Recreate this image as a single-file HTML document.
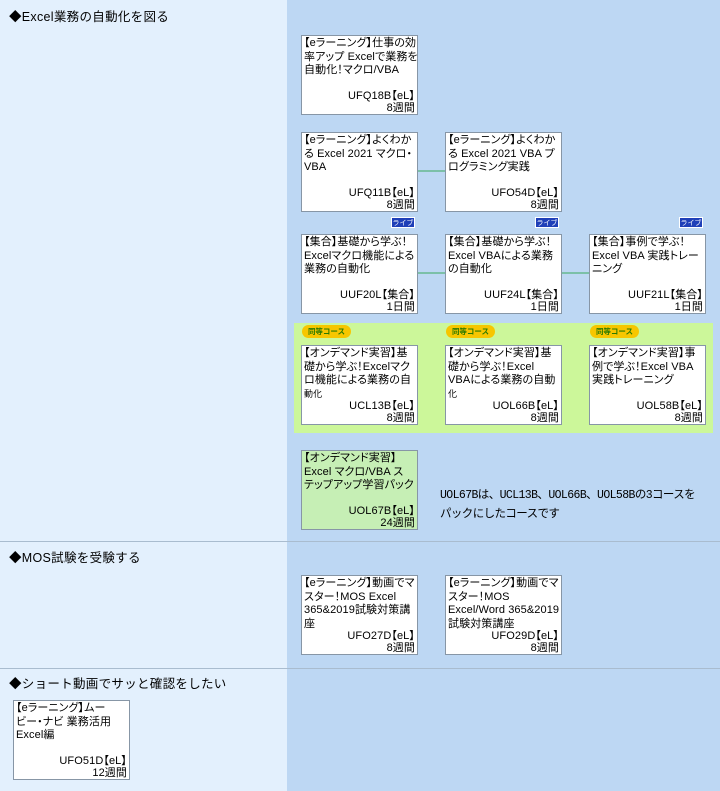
<!DOCTYPE html>
<html><head><meta charset="utf-8"><style>
body{margin:0;width:720px;height:791px;position:relative;background:#bdd7f3;font-family:"Liberation Sans","Noto Sans CJK JP",sans-serif;overflow:hidden}
.l{position:absolute;left:0;width:287px;background:#e3f0fd}
.hd{position:absolute;left:9px;font-size:12.5px;color:#000;letter-spacing:0.3px}
.hr{position:absolute;left:0;width:720px;height:1px;background:#a9bccf}
.b{position:absolute;width:115px;height:78px;background:#fff;border:1px solid #8796a6;font-size:11px;line-height:16px;color:#000;overflow:hidden;white-space:nowrap;font-feature-settings:"palt";letter-spacing:0.1px}
.b .t{padding:1px 0 0 2px;line-height:13.5px}
.b .c{position:absolute;right:2px;bottom:11px;line-height:14px}
.b .w{position:absolute;right:2px;bottom:-1px;line-height:13px}
.ln{position:absolute;height:2px;background:#7cc0a8}
.lv{position:absolute;width:24px;height:11px;background:#1f3fb8;color:#fff;font-size:7px;line-height:11px;text-align:center;border:1px solid #fff;box-sizing:border-box;overflow:hidden;white-space:nowrap}
.eq{position:absolute;width:49px;height:13px;background:#f7c600;color:#2a7a00;font-size:7.5px;line-height:13px;text-align:center;border-radius:7px;white-space:nowrap;font-weight:bold}
</style></head><body>
<div class="l" style="top:0;height:541px"></div>
<div class="l" style="top:542px;height:126px"></div>
<div class="l" style="top:669px;height:122px"></div>
<div class="hr" style="top:541px"></div>
<div class="hr" style="top:668px"></div>
<div class="hd" style="top:6px">◆Excel業務の自動化を図る</div>
<div class="hd" style="top:547px">◆MOS試験を受験する</div>
<div class="hd" style="top:673px">◆ショート動画でサッと確認をしたい</div>

<div class="b" style="left:301px;top:35px"><div class="t">【eラーニング】仕事の効<br>率アップ Excelで業務を<br>自動化！マクロ/VBA</div><div class="c">UFQ18B【eL】</div><div class="w">8週間</div></div>

<div class="ln" style="left:418px;top:170px;width:28px"></div>
<div class="b" style="left:301px;top:132px"><div class="t">【eラーニング】よくわか<br>る Excel 2021 マクロ・<br>VBA</div><div class="c">UFQ11B【eL】</div><div class="w">8週間</div></div>
<div class="b" style="left:445px;top:132px"><div class="t">【eラーニング】よくわか<br>る Excel 2021 VBA プ<br>ログラミング実践</div><div class="c">UFO54D【eL】</div><div class="w">8週間</div></div>

<div class="lv" style="left:391px;top:217px">ライブ</div>
<div class="lv" style="left:535px;top:217px">ライブ</div>
<div class="lv" style="left:679px;top:217px">ライブ</div>
<div class="ln" style="left:418px;top:272px;width:28px"></div>
<div class="ln" style="left:562px;top:272px;width:28px"></div>
<div class="b" style="left:301px;top:234px"><div class="t">【集合】基礎から学ぶ！<br>Excelマクロ機能による<br>業務の自動化</div><div class="c">UUF20L【集合】</div><div class="w">1日間</div></div>
<div class="b" style="left:445px;top:234px"><div class="t">【集合】基礎から学ぶ！<br>Excel VBAによる業務<br>の自動化</div><div class="c">UUF24L【集合】</div><div class="w">1日間</div></div>
<div class="b" style="left:589px;top:234px"><div class="t">【集合】事例で学ぶ！<br>Excel VBA 実践トレー<br>ニング</div><div class="c">UUF21L【集合】</div><div class="w">1日間</div></div>

<div style="position:absolute;left:294px;top:323px;width:419px;height:110px;background:#ccf79a"></div>
<div class="eq" style="left:302px;top:325px">同等コース</div>
<div class="eq" style="left:446px;top:325px">同等コース</div>
<div class="eq" style="left:590px;top:325px">同等コース</div>
<div class="b" style="left:301px;top:345px"><div class="t">【オンデマンド実習】基<br>礎から学ぶ！Excelマク<br>ロ機能による業務の自<br><span style="font-size:9px">動化</span></div><div class="c">UCL13B【eL】</div><div class="w">8週間</div></div>
<div class="b" style="left:445px;top:345px"><div class="t">【オンデマンド実習】基<br>礎から学ぶ！Excel<br>VBAによる業務の自動<br><span style="font-size:9px">化</span></div><div class="c">UOL66B【eL】</div><div class="w">8週間</div></div>
<div class="b" style="left:589px;top:345px"><div class="t">【オンデマンド実習】事<br>例で学ぶ！Excel VBA<br>実践トレーニング</div><div class="c">UOL58B【eL】</div><div class="w">8週間</div></div>

<div class="b" style="left:301px;top:450px;background:#c6efb5"><div class="t">【オンデマンド実習】<br>Excel マクロ/VBA ス<br>テップアップ学習パック</div><div class="c">UOL67B【eL】</div><div class="w">24週間</div></div>
<div style="position:absolute;left:440px;top:486px;font-size:11.5px;line-height:19px;white-space:nowrap;font-family:'Liberation Mono','Noto Sans CJK JP',monospace;letter-spacing:-0.6px">UOL67Bは、UCL13B、UOL66B、UOL58Bの3コースを<br>パックにしたコースです</div>

<div class="b" style="left:301px;top:575px"><div class="t">【eラーニング】動画でマ<br>スター！MOS Excel<br>365&amp;2019試験対策講<br>座</div><div class="c">UFO27D【eL】</div><div class="w">8週間</div></div>
<div class="b" style="left:445px;top:575px"><div class="t">【eラーニング】動画でマ<br>スター！MOS<br>Excel/Word 365&amp;2019<br>試験対策講座</div><div class="c">UFO29D【eL】</div><div class="w">8週間</div></div>

<div class="b" style="left:13px;top:700px"><div class="t">【eラーニング】ムー<br>ビー・ナビ 業務活用<br>Excel編</div><div class="c">UFO51D【eL】</div><div class="w">12週間</div></div>
</body></html>
